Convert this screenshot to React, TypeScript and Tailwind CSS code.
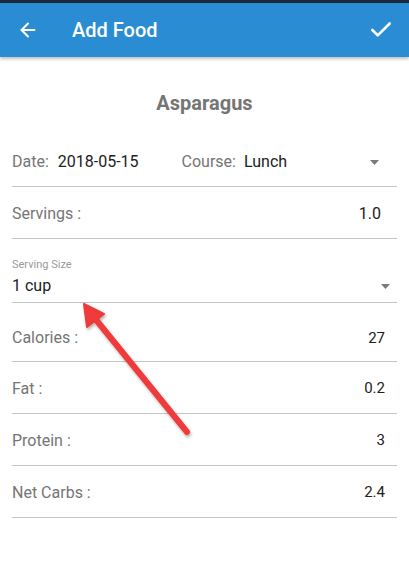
import { ArrowLeft, Check } from 'lucide-react';

const nutrients = [
  { label: 'Calories :', value: '27', tall: true },
  { label: 'Fat :', value: '0.2', tall: false },
  { label: 'Protein :', value: '3', tall: false },
  { label: 'Net Carbs :', value: '2.4', tall: false },
];

function Caret({ className = '' }: { className?: string }) {
  return (
    <svg width="9" height="5" viewBox="0 0 9 5" className={className}>
      <path d="M0 0 L9 0 L4.5 5 Z" fill="#7a7a7a" />
    </svg>
  );
}

export default function App() {
  return (
    <div className="relative w-[409px] h-[562px] bg-white overflow-hidden font-['Roboto',sans-serif]">
      <div className="h-[3px] bg-[#1b2a3a]" />
      <header className="h-[54px] bg-[#2a8dd3] flex items-center text-white shadow-[0_2px_3px_rgba(0,0,0,0.25)]">
        <ArrowLeft className="ml-[17px] w-[22px] h-[22px]" strokeWidth={2.2} />
        <h1 className="ml-[33px] text-[20px] font-medium">Add Food</h1>
        <Check className="ml-auto mr-[15px] w-[26px] h-[26px]" strokeWidth={2.4} />
      </header>

      <h2 className="mt-[32px] text-center text-[20px] leading-[28px] font-bold text-[#757575]">Asparagus</h2>

      <div className="mx-[12px] mt-[19px] text-[16px]">
        <div className="flex items-center h-[51px] border-b border-[#c4c4c4] pt-[2px]">
          <span className="text-[#757575]">Date:</span>
          <span className="ml-[9px] text-[#212121]">2018-05-15</span>
          <span className="ml-[43px] text-[#757575]">Course:</span>
          <span className="ml-[8px] text-[#212121]">Lunch</span>
          <Caret className="ml-auto mr-[18px]" />
        </div>
        <div className="flex items-center justify-between h-[52px] border-b border-[#c4c4c4] pt-[2px]">
          <span className="text-[#757575]">Servings :</span>
          <span className="mr-[16px] text-[#212121]">1.0</span>
        </div>
        <div className="h-[64px] border-b border-[#c4c4c4] pt-[19px]">
          <div className="text-[11px] text-[#9a9a9a] leading-[14px]">Serving Size</div>
          <div className="flex items-center justify-between mt-[4px]">
            <span className="text-[#212121] leading-[20px]">1 cup</span>
            <Caret className="mr-[7px]" />
          </div>
        </div>
        {nutrients.map((n) => (
          <div
            key={n.label}
            className={
              n.tall
                ? 'flex items-center justify-between h-[59px] border-b border-[#c4c4c4] pt-[12px]'
                : 'flex items-center justify-between h-[52px] border-b border-[#c4c4c4] pt-[2px]'
            }
          >
            <span className="text-[#757575]">{n.label}</span>
            <span className="mr-[12px] text-[15px] text-[#212121]">{n.value}</span>
          </div>
        ))}
      </div>

      <svg className="absolute left-0 top-0 pointer-events-none" width="409" height="562">
        <defs>
          <filter id="sh" x="-20%" y="-20%" width="140%" height="140%">
            <feDropShadow dx="1" dy="2" stdDeviation="1.5" floodColor="#000" floodOpacity="0.3" />
          </filter>
        </defs>
        <g filter="url(#sh)">
          <line x1="187" y1="432" x2="93" y2="316" stroke="#ee3a3a" strokeWidth="6" strokeLinecap="round" />
          <path d="M84 304 L104 314 L87 327 Z" fill="#ee3a3a" stroke="#ee3a3a" strokeWidth="2" strokeLinejoin="round" />
        </g>
      </svg>
    </div>
  );
}
